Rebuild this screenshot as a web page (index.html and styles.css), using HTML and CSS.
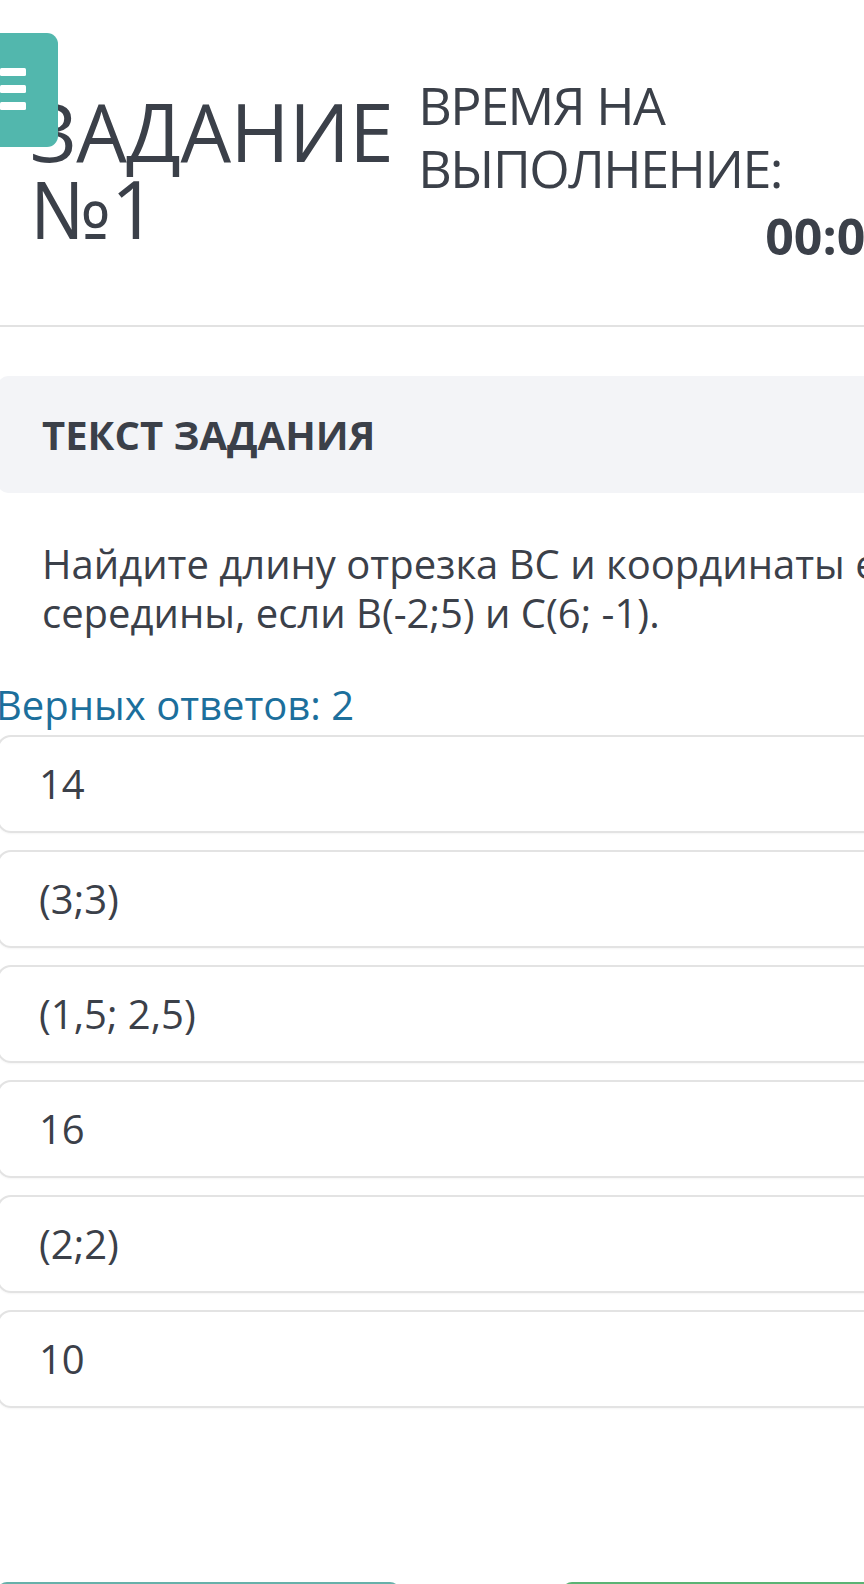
FILE: index.html
```html
<!DOCTYPE html>
<html lang="ru">
<head>
<meta charset="utf-8">
<title>Задание №1</title>
<link rel="stylesheet" href="styles.css">
</head>
<body>
<div class="page">
  <header class="header">
    <h1 class="title">ЗАДАНИЕ<br>№1</h1>
    <div class="timer">
      <div class="timer-label">ВРЕМЯ НА<br>ВЫПОЛНЕНИЕ:</div>
      <div class="timer-value">00:00:00</div>
    </div>
    <button class="menu-btn" aria-label="Меню">
      <svg width="26" height="42" viewBox="0 0 26 42"><rect x="0" y="0" width="26" height="8" rx="1.5" fill="#fff"/><rect x="0" y="17" width="26" height="8" rx="1.5" fill="#fff"/><rect x="0" y="34" width="26" height="8" rx="1.5" fill="#fff"/></svg>
    </button>
  </header>
  <hr class="divider">
  <section class="task">
    <div class="task-head">ТЕКСТ ЗАДАНИЯ</div>
    <p class="task-text">Найдите длину отрезка ВС и координаты его середины, если B(-2;5) и C(6; -1).</p>
  </section>
  <div class="answers-count">Верных ответов: 2</div>
  <ul class="answers">
    <li class="answer">14</li>
    <li class="answer">(3;3)</li>
    <li class="answer">(1,5; 2,5)</li>
    <li class="answer">16</li>
    <li class="answer">(2;2)</li>
    <li class="answer">10</li>
  </ul>
  <div class="actions">
    <button class="btn btn-back">Назад</button>
    <button class="btn btn-next">Далее</button>
  </div>
</div>
</body>
</html>
```

FILE: styles.css
```css
html, body {
  margin: 0;
  padding: 0;
  background: #fff;
}
body {
  width: 864px;
  height: 1584px;
  overflow: hidden;
  font-family: "Open Sans", "Noto Sans", sans-serif;
  color: #3b4049;
}
.page {
  width: 960px;
  margin-left: -3px;
}
.header {
  position: relative;
  display: flex;
  align-items: flex-start;
  height: 325px;
}
.title {
  margin: 92px 0 0 33px;
  font-size: 80px;
  line-height: 77px;
  font-weight: 400;
  letter-spacing: -0.5px;
}
.timer {
  margin: 73px 0 0 25px;
  width: 520px;
}
.timer-label {
  font-size: 52px;
  line-height: 63px;
  font-weight: 400;
  letter-spacing: -1.5px;
}
.timer-value {
  font-size: 50px;
  font-weight: 700;
  line-height: 60px;
  margin-top: 7px;
  padding-left: 347px;
  white-space: nowrap;
}
.menu-btn {
  position: absolute;
  left: 3px;
  top: 33px;
  width: 58px;
  height: 114px;
  border: 0;
  padding: 0;
  background: #52b7ad;
  border-radius: 0 11px 11px 0;
  display: flex;
  align-items: center;
  justify-content: flex-start;
}
.menu-btn svg { display: block; margin-top: -2px; }
.divider {
  margin: 0;
  border: 0;
  height: 2px;
  background: #e2e2e2;
}
.task {
  margin-top: 49px;
}
.task-head {
  margin-left: 1px;
  height: 117px;
  box-sizing: border-box;
  padding-left: 44px;
  display: flex;
  align-items: center;
  background: #f3f4f7;
  border-radius: 10px;
  font-size: 40px;
  font-weight: 700;
}
.task-text {
  margin: 46px 0 0 45px;
  width: 880px;
  font-size: 40px;
  line-height: 49px;
}
.answers-count {
  margin: 46px 0 0 -1px;
  font-size: 40px;
  line-height: 44px;
  color: #1c6f9c;
}
.answers {
  list-style: none;
  margin: 8px 0 0;
  padding: 0;
  display: flex;
  flex-direction: column;
  gap: 17px;
}
.answer {
  box-sizing: border-box;
  height: 98px;
  padding: 23px 0 0 40px;
  border: 2px solid #e3e3e3;
  border-radius: 14px;
  font-size: 40px;
  line-height: 48px;
  box-shadow: 0 1px 2px rgba(0,0,0,0.04);
}
.actions {
  margin-top: 174px;
  display: flex;
  gap: 162px;
}
.btn {
  border: 0;
  height: 70px;
  border-radius: 10px;
  font-family: inherit;
  font-size: 36px;
  color: #fff;
}
.btn-back {
  width: 408px;
  background: #67b0a9;
}
.btn-next {
  width: 400px;
  background: #5bb374;
}
```
